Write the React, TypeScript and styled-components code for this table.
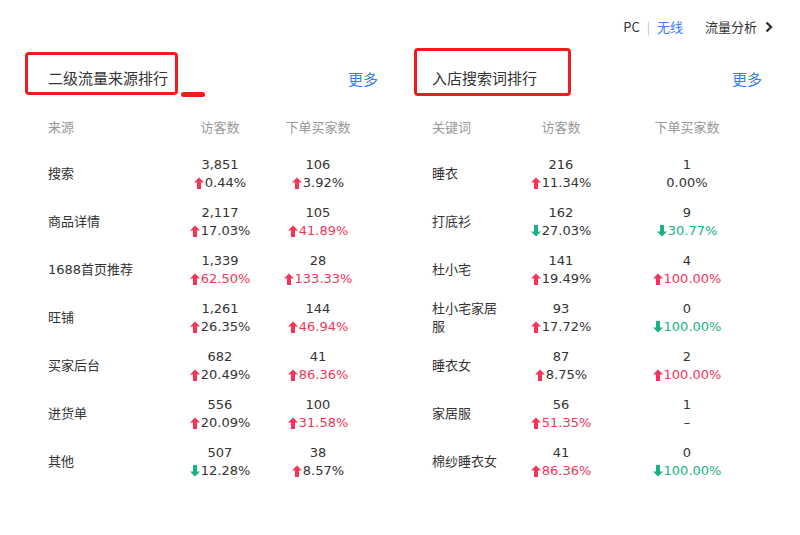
import React from 'react';
import styled, { createGlobalStyle } from 'styled-components';

const GlobalStyle = createGlobalStyle`
  html, body {
    margin: 0;
    padding: 0;
    background: #fff;
  }
  body {
    font-family: "Noto Sans CJK SC", "Liberation Sans", sans-serif;
    color: #333;
  }
`;

const RED = '#f5345a';
const GREEN = '#16b388';
const BLUE = '#3a7cf4';

type Trend = 'up' | 'down' | 'none';

interface Metric {
  value: string;
  pct: string;
  trend: Trend;
  hot?: boolean;
}

interface Row {
  label: string;
  visitors: Metric;
  buyers: Metric;
}

const sourceRows: Row[] = [
  { label: '搜索', visitors: { value: '3,851', pct: '0.44%', trend: 'up' }, buyers: { value: '106', pct: '3.92%', trend: 'up' } },
  { label: '商品详情', visitors: { value: '2,117', pct: '17.03%', trend: 'up' }, buyers: { value: '105', pct: '41.89%', trend: 'up', hot: true } },
  { label: '1688首页推荐', visitors: { value: '1,339', pct: '62.50%', trend: 'up', hot: true }, buyers: { value: '28', pct: '133.33%', trend: 'up', hot: true } },
  { label: '旺铺', visitors: { value: '1,261', pct: '26.35%', trend: 'up' }, buyers: { value: '144', pct: '46.94%', trend: 'up', hot: true } },
  { label: '买家后台', visitors: { value: '682', pct: '20.49%', trend: 'up' }, buyers: { value: '41', pct: '86.36%', trend: 'up', hot: true } },
  { label: '进货单', visitors: { value: '556', pct: '20.09%', trend: 'up' }, buyers: { value: '100', pct: '31.58%', trend: 'up', hot: true } },
  { label: '其他', visitors: { value: '507', pct: '12.28%', trend: 'down' }, buyers: { value: '38', pct: '8.57%', trend: 'up' } },
];

const keywordRows: Row[] = [
  { label: '睡衣', visitors: { value: '216', pct: '11.34%', trend: 'up' }, buyers: { value: '1', pct: '0.00%', trend: 'none' } },
  { label: '打底衫', visitors: { value: '162', pct: '27.03%', trend: 'down' }, buyers: { value: '9', pct: '30.77%', trend: 'down', hot: true } },
  { label: '杜小宅', visitors: { value: '141', pct: '19.49%', trend: 'up' }, buyers: { value: '4', pct: '100.00%', trend: 'up', hot: true } },
  { label: '杜小宅家居服', visitors: { value: '93', pct: '17.72%', trend: 'up' }, buyers: { value: '0', pct: '100.00%', trend: 'down', hot: true } },
  { label: '睡衣女', visitors: { value: '87', pct: '8.75%', trend: 'up' }, buyers: { value: '2', pct: '100.00%', trend: 'up', hot: true } },
  { label: '家居服', visitors: { value: '56', pct: '51.35%', trend: 'up', hot: true }, buyers: { value: '1', pct: '–', trend: 'none' } },
  { label: '棉纱睡衣女', visitors: { value: '41', pct: '86.36%', trend: 'up', hot: true }, buyers: { value: '0', pct: '100.00%', trend: 'down', hot: true } },
];

const Page = styled.div`
  width: 800px;
  height: 535px;
  padding-top: 18px;
  box-sizing: border-box;
`;

const TopBar = styled.div`
  display: flex;
  justify-content: flex-end;
  align-items: center;
  padding-right: 27px;
  height: 18px;
  font-size: 13px;
  line-height: 18px;
  color: #333;
`;

const Switch = styled.span<{ $active?: boolean }>`
  color: ${({ $active }) => ($active ? BLUE : '#333')};
`;

const Divider = styled.span`
  color: #bbb;
  margin: 0 7px;
  font-size: 12px;
`;

const AnalysisLink = styled.span`
  display: flex;
  align-items: center;
  margin-left: 22px;
  gap: 8px;
`;

const Panels = styled.div`
  display: grid;
  grid-template-columns: 330px 330px;
  column-gap: 54px;
  padding-left: 48px;
  margin-top: 32px;
`;

const Panel = styled.section``;

const TitleRow = styled.div`
  display: flex;
  justify-content: space-between;
  align-items: center;
  height: 20px;
`;

const TitleWrap = styled.div`
  position: relative;
`;

const Title = styled.h2`
  margin: 0;
  font-size: 15px;
  font-weight: 400;
  line-height: 20px;
  color: #333;
`;

const MarkBox = styled.div<{ $left: number; $top: number; $w: number; $h: number }>`
  position: absolute;
  left: ${({ $left }) => $left}px;
  top: ${({ $top }) => $top}px;
  width: ${({ $w }) => $w}px;
  height: ${({ $h }) => $h}px;
  border: 3px solid #f01c1c;
  border-radius: 4px;
  box-sizing: border-box;
`;

const MarkBar = styled.div`
  position: absolute;
  left: 133px;
  top: 24px;
  width: 24px;
  height: 5px;
  border-radius: 3px;
  background: #f01c1c;
`;

const More = styled.a`
  font-size: 15px;
  color: ${BLUE};
  text-decoration: none;
`;

const Grid = styled.div<{ $cols: string }>`
  display: grid;
  grid-template-columns: ${({ $cols }) => $cols};
  align-items: center;
`;

const HeadRow = styled(Grid)`
  margin-top: 30px;
  margin-bottom: 14px;
  height: 18px;
  font-size: 13px;
  line-height: 18px;
  color: #999;
`;

const HeadCell = styled.div<{ $center?: boolean }>`
  text-align: ${({ $center }) => ($center ? 'center' : 'left')};
`;

const DataRow = styled(Grid)`
  height: 48px;
`;

const Label = styled.div`
  font-family: "DejaVu Sans", "Noto Sans CJK SC", sans-serif;
  font-size: 13px;
  line-height: 18px;
  color: #333;
`;

const Cell = styled.div`
  display: flex;
  flex-direction: column;
  align-items: center;
  font-family: "DejaVu Sans", "Noto Sans CJK SC", sans-serif;
  font-size: 13px;
  line-height: 18px;
  color: #333;
`;

const Pct = styled.div<{ $color: string }>`
  display: flex;
  align-items: center;
  color: ${({ $color }) => $color};
`;

const ArrowSvg = styled.svg`
  width: 10px;
  height: 12px;
  margin-right: 1px;
  flex-shrink: 0;
`;

const Arrow = ({ dir }: { dir: 'up' | 'down' }) => (
  <ArrowSvg viewBox="0 0 10 12">
    {dir === 'up' ? (
      <path d="M5 0.5 L10 5.5 H7 V12 H3 V5.5 H0 Z" fill={RED} />
    ) : (
      <path d="M5 11.5 L10 6.5 H7 V0 H3 V6.5 H0 Z" fill={GREEN} />
    )}
  </ArrowSvg>
);

const MetricCell = ({ m }: { m: Metric }) => {
  const color = m.hot ? (m.trend === 'down' ? GREEN : RED) : '#333';
  return (
    <Cell>
      <span>{m.value}</span>
      <Pct $color={color}>
        {m.trend !== 'none' && <Arrow dir={m.trend} />}
        {m.pct}
      </Pct>
    </Cell>
  );
};

const Chevron = () => (
  <svg width="8" height="12" viewBox="0 0 8 12">
    <path d="M1.5 1.5 L6 6 L1.5 10.5" fill="none" stroke="#333" strokeWidth="2.4" />
  </svg>
);

interface RankProps {
  title: string;
  firstCol: string;
  cols: string;
  rows: Row[];
  box: { left: number; top: number; w: number; h: number };
  bar?: boolean;
}

const RankPanel = ({ title, firstCol, cols, rows, box, bar }: RankProps) => (
  <Panel>
    <TitleRow>
      <TitleWrap>
        <Title>{title}</Title>
        <MarkBox $left={box.left} $top={box.top} $w={box.w} $h={box.h} />
        {bar && <MarkBar />}
      </TitleWrap>
      <More>更多</More>
    </TitleRow>
    <HeadRow $cols={cols}>
      <HeadCell>{firstCol}</HeadCell>
      <HeadCell $center>访客数</HeadCell>
      <HeadCell $center>下单买家数</HeadCell>
    </HeadRow>
    {rows.map((r) => (
      <DataRow key={r.label} $cols={cols}>
        <Label>{r.label}</Label>
        <MetricCell m={r.visitors} />
        <MetricCell m={r.buyers} />
      </DataRow>
    ))}
  </Panel>
);

export default function App() {
  return (
    <>
      <GlobalStyle />
      <Page>
        <TopBar>
          <Switch>PC</Switch>
          <Divider>|</Divider>
          <Switch $active>无线</Switch>
          <AnalysisLink>
            流量分析
            <Chevron />
          </AnalysisLink>
        </TopBar>
        <Panels>
          <RankPanel
            title="二级流量来源排行"
            firstCol="来源"
            cols="130px 84px 112px"
            rows={sourceRows}
            box={{ left: -23, top: -16, w: 153, h: 43 }}
            bar
          />
          <RankPanel
            title="入店搜索词排行"
            firstCol="关键词"
            cols="72px 114px 138px"
            rows={keywordRows}
            box={{ left: -18, top: -20, w: 157, h: 48 }}
          />
        </Panels>
      </Page>
    </>
  );
}
